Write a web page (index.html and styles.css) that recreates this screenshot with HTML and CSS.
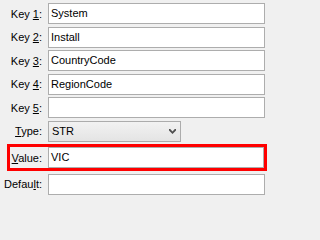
FILE: index.html
```html
<!DOCTYPE html>
<html>
<head>
<meta charset="utf-8">
<link rel="stylesheet" href="styles.css">
</head>
<body>
<div class="form">
  <div class="row"><label class="lbl">Key <u>1</u>:</label><div class="field">System</div></div>
  <div class="row"><label class="lbl">Key <u>2</u>:</label><div class="field">Install</div></div>
  <div class="row"><label class="lbl">Key <u>3</u>:</label><div class="field">CountryCode</div></div>
  <div class="row"><label class="lbl">Key <u>4</u>:</label><div class="field">RegionCode</div></div>
  <div class="row"><label class="lbl">Key <u>5</u>:</label><div class="field"></div></div>
  <div class="row"><label class="lbl"><u>T</u>ype:</label>
    <div class="combo"><span class="combo-text">STR</span>
      <svg class="chev" width="7" height="5" viewBox="0 0 7 5"><polygon points="0,0 1.2,0 3.5,2.4 5.8,0 7,0 7,1.4 3.5,5 0,1.4" fill="#505050"/></svg>
    </div>
  </div>
  <div class="row row-hl"><label class="lbl"><u>V</u>alue:</label><div class="field">VIC</div></div>
  <div class="row"><label class="lbl">Defau<u>l</u>t:</label><div class="field"></div></div>
</div>
</body>
</html>
```
FILE: styles.css
```css
html, body {
  margin: 0;
  padding: 0;
  background: #f0f0f0;
}
body {
  width: 267px;
  height: 200px;
  overflow: hidden;
  font-family: "Liberation Sans", Arial, sans-serif;
  font-size: 11px;
  color: #000;
}
.form {
  padding-top: 3px;
  display: flex;
  flex-direction: column;
  gap: 2.5px;
}
.row {
  display: flex;
  align-items: center;
  height: 21px;
  margin-right: 2px;
}
.lbl {
  width: 42px;
  flex: none;
  text-align: right;
  margin-right: 6px;
  white-space: nowrap;
}
.lbl u {
  text-decoration-thickness: 1px;
  text-underline-offset: 1px;
}
.field {
  flex: 1;
  height: 21px;
  box-sizing: border-box;
  border: 1px solid #adadad;
  background: #fff;
  padding-left: 2px;
  line-height: 19px;
  white-space: nowrap;
}
.combo {
  width: 133px;
  height: 21px;
  box-sizing: border-box;
  border: 1px solid #acacac;
  background: linear-gradient(#f2f2f2, #e4e4e4);
  display: flex;
  align-items: center;
  justify-content: space-between;
  padding: 0 4px 0 3px;
}
.combo-text {
  line-height: 19px;
}
.chev {
  display: block;
}
.row-hl {
  height: 21px;
  border: 3px solid #f00;
  margin-left: 7px;
  margin-right: 0;
}
.row-hl .lbl {
  width: 32px;
}
```
